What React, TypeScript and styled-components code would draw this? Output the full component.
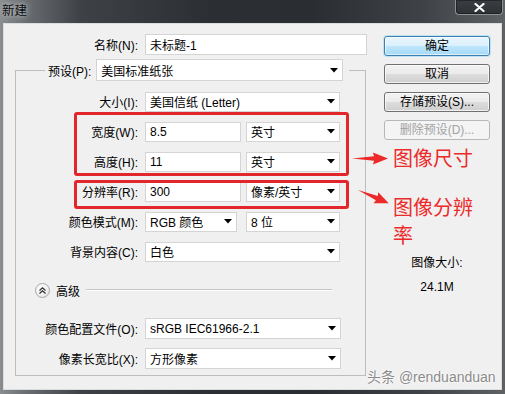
import React from "react";
import styled, { createGlobalStyle } from "styled-components";

const Global = createGlobalStyle`
  html, body { margin: 0; padding: 0; background: #2f3336; }
  body {
    font-family: "Liberation Sans", "Noto Sans CJK SC", sans-serif;
    font-size: 12px;
    color: #000;
  }
  * { box-sizing: border-box; }
`;

const Window = styled.div`
  position: relative;
  width: 505px;
  height: 394px;
  display: flex;
  flex-direction: column;
  overflow: hidden;
  background: linear-gradient(
    90deg,
    #8a8e91 0%,
    #6a6e72 5%,
    #3e4246 16%,
    #2b2f33 42%,
    #2a2e32 62%,
    #3f4347 84%,
    #5e6265 100%
  );
`;

const TitleBar = styled.div`
  height: 23px;
  flex: none;
  display: flex;
  align-items: flex-start;
  justify-content: space-between;
  padding-left: 2px;
`;

const Title = styled.span`
  font-family: "Noto Sans CJK SC", sans-serif;
  font-size: 12.5px;
  line-height: 20px;
  color: #0c0c0c;
  text-shadow: 0 0 4px rgba(200, 204, 206, 0.9), 0 0 8px rgba(200, 204, 206, 0.7);
`;

const CloseButton = styled.div`
  width: 48px;
  height: 15px;
  margin-right: 2px;
  border: 1px solid #8e9194;
  border-top: none;
  border-radius: 0 0 4px 4px;
  background: linear-gradient(#3a3e42, #2e3236);
  box-shadow: inset 0 0 0 1px rgba(0, 0, 0, 0.35);
  display: flex;
  align-items: center;
  justify-content: center;
`;

const Body = styled.div`
  flex: 1;
  margin: 0 3px 4px 3px;
  background: #f0f0f0;
  border: 1px solid #dcdcdc;
  display: flex;
  align-items: flex-start;
  padding: 10px 0 0 11px;
`;

const LeftCol = styled.div`
  width: 351px;
  flex: none;
  display: flex;
  flex-direction: column;
`;

const Row = styled.div<{ $mt?: number }>`
  display: flex;
  align-items: center;
  height: 21px;
  margin-top: ${(p) => p.$mt ?? 0}px;
`;

const Label = styled.span<{ $w: number }>`
  width: ${(p) => p.$w}px;
  flex: none;
  text-align: right;
  margin-right: 7px;
  white-space: nowrap;
  font-size: 12px;
  color: #000;
`;

const Field = styled.div<{ $w: number; $h?: number; $ml?: number }>`
  width: ${(p) => p.$w}px;
  height: ${(p) => p.$h ?? 20}px;
  margin-left: ${(p) => p.$ml ?? 0}px;
  flex: none;
  background: #fff;
  border: 1px solid #d4d4d4;
  display: flex;
  align-items: center;
  padding: 0 4px 0 4px;
  font-size: 12px;
  color: #000;
  white-space: nowrap;
  overflow: hidden;
`;

const Caret = styled.svg`
  margin-left: auto;
  flex: none;
`;

const Group = styled.fieldset`
  margin: 4px 0 0 0;
  padding: 10px 0 6px 0;
  border: 1px solid #bdbdbd;
  width: 351px;
  display: flex;
  flex-direction: column;
  gap: 9px;
  min-width: 0;
`;

const Legend = styled.legend`
  margin-left: 29px;
  padding: 0 6px 0 3px;
  display: flex;
  align-items: center;
`;

const LegendLabel = styled.span`
  margin-right: 5px;
  font-size: 12px;
  white-space: nowrap;
`;

const AdvancedRow = styled.div`
  display: flex;
  align-items: center;
  height: 20px;
  margin: 9px 0;
  padding-left: 19px;
`;

const RoundIcon = styled.div`
  width: 15px;
  height: 15px;
  border-radius: 50%;
  border: 1px solid #a8a8a8;
  background: radial-gradient(circle at 40% 35%, #ffffff 0%, #f2f2f2 50%, #d9d9d9 100%);
  display: flex;
  align-items: center;
  justify-content: center;
  flex: none;
`;

const AdvancedText = styled.span`
  margin-left: 6px;
  font-size: 12px;
`;

const Divider = styled.div`
  margin-left: 6px;
  width: 246px;
  height: 2px;
  border-top: 1px solid #c6c6c6;
  border-bottom: 1px solid #ffffff;
`;

const Side = styled.div`
  margin-left: 18px;
  width: 106px;
  padding-top: 2px;
  display: flex;
  flex-direction: column;
  gap: 8px;
`;

type Variant = "primary" | "normal" | "disabled";

const Button = styled.button<{ $variant?: Variant }>`
  width: 106px;
  height: 20px;
  padding: 0;
  font-family: "Liberation Sans", "Noto Sans CJK SC", sans-serif;
  font-size: 12px;
  line-height: 18px;
  border-radius: 3px;
  text-align: center;
  cursor: default;
  color: ${(p) => (p.$variant === "disabled" ? "#a3a3a3" : "#000")};
  border: 1px solid
    ${(p) =>
      p.$variant === "primary"
        ? "#3c7fb1"
        : p.$variant === "disabled"
        ? "#b5b8ba"
        : "#707070"};
  background: ${(p) =>
    p.$variant === "primary"
      ? "linear-gradient(#eaf6fd 0%, #d9f0fc 50%, #bee6fd 51%, #a7d9f5 100%)"
      : p.$variant === "disabled"
      ? "#f4f4f4"
      : "linear-gradient(#f2f2f2 0%, #ebebeb 50%, #dddddd 51%, #cfcfcf 100%)"};
  box-shadow: ${(p) =>
    p.$variant === "primary"
      ? "inset 0 0 0 1px rgba(255,255,255,0.6), 0 0 0 1px rgba(100,200,240,0.35)"
      : p.$variant === "disabled"
      ? "none"
      : "inset 0 0 0 1px rgba(255,255,255,0.7)"};
`;

const Info = styled.div`
  margin-top: 107px;
  display: flex;
  flex-direction: column;
  align-items: center;
  gap: 8px;
`;

const InfoText = styled.span`
  font-size: 12px;
  line-height: 16px;
  color: #000;
`;

/* ---------- annotations (overlay) ---------- */

const Overlay = styled.div`
  position: absolute;
  inset: 0;
  pointer-events: none;
`;

const RedBox = styled.div<{ $x: number; $y: number; $w: number; $h: number }>`
  position: absolute;
  left: ${(p) => p.$x}px;
  top: ${(p) => p.$y}px;
  width: ${(p) => p.$w}px;
  height: ${(p) => p.$h}px;
  border: 3px solid #e3262b;
  border-radius: 3px;
`;

const RedText = styled.div<{ $x: number; $y: number; $w: number }>`
  position: absolute;
  left: ${(p) => p.$x}px;
  top: ${(p) => p.$y}px;
  width: ${(p) => p.$w}px;
  font-family: "Noto Sans CJK SC", sans-serif;
  font-size: 20px;
  line-height: 28px;
  color: #ec2a2a;
`;

const ArrowSvg = styled.svg<{ $x: number; $y: number }>`
  position: absolute;
  left: ${(p) => p.$x}px;
  top: ${(p) => p.$y}px;
`;

const Watermark = styled.div`
  position: absolute;
  left: 367px;
  top: 369px;
  font-family: "Liberation Sans", "Noto Sans CJK SC", sans-serif;
  font-size: 14px;
  line-height: 16px;
  color: #8a8a8a;
  text-shadow: 0 0 2px #fff, 0 0 2px #fff;
  white-space: nowrap;
`;

const CaretIcon = () => (
  <Caret width="8" height="5" viewBox="0 0 8 5">
    <polygon points="0,0 8,0 4,4.5" fill="#000" />
  </Caret>
);

const Select: React.FC<{ w: number; h?: number; ml?: number; children: React.ReactNode }> = ({
  w,
  h,
  ml,
  children,
}) => (
  <Field $w={w} $h={h} $ml={ml}>
    <span>{children}</span>
    <CaretIcon />
  </Field>
);

const ARROW_POINTS = "0,6.5 22,4.2 21,0.5 36,6.5 21,12.5 22,8.8";

export default function App() {
  return (
    <>
      <Global />
      <Window>
        <TitleBar>
          <Title>新建</Title>
          <CloseButton>
            <svg width="11" height="9" viewBox="0 0 11 9">
              <path d="M1.5 1 L9.5 8 M9.5 1 L1.5 8" stroke="#fff" strokeWidth="2.2" strokeLinecap="round" />
            </svg>
          </CloseButton>
        </TitleBar>
        <Body>
          <LeftCol>
            <Row>
              <Label $w={123}>名称(N):</Label>
              <Field $w={222} $h={21}>未标题-1</Field>
            </Row>
            <Group>
              <Legend>
                <LegendLabel>预设(P):</LegendLabel>
                <Select w={247} h={22}>美国标准纸张</Select>
              </Legend>
              <Row>
                <Label $w={122}>大小(I):</Label>
                <Select w={195}>美国信纸 (Letter)</Select>
              </Row>
              <Row>
                <Label $w={122}>宽度(W):</Label>
                <Field $w={96}>8.5</Field>
                <Select w={94} ml={5}>英寸</Select>
              </Row>
              <Row>
                <Label $w={122}>高度(H):</Label>
                <Field $w={96}>11</Field>
                <Select w={94} ml={5}>英寸</Select>
              </Row>
              <Row>
                <Label $w={122}>分辨率(R):</Label>
                <Field $w={96}>300</Field>
                <Select w={94} ml={5}>像素/英寸</Select>
              </Row>
              <Row>
                <Label $w={122}>颜色模式(M):</Label>
                <Select w={92}>RGB 颜色</Select>
                <Select w={94} ml={9}>8 位</Select>
              </Row>
              <Row>
                <Label $w={122}>背景内容(C):</Label>
                <Select w={195}>白色</Select>
              </Row>
              <AdvancedRow>
                <RoundIcon>
                  <svg width="9" height="9" viewBox="0 0 9 9">
                    <path
                      d="M1.5 4.5 L4.5 1.8 L7.5 4.5 M1.5 7.5 L4.5 4.8 L7.5 7.5"
                      fill="none"
                      stroke="#333"
                      strokeWidth="1.3"
                    />
                  </svg>
                </RoundIcon>
                <AdvancedText>高级</AdvancedText>
                <Divider />
              </AdvancedRow>
              <Row>
                <Label $w={122}>颜色配置文件(O):</Label>
                <Select w={196} h={21}>sRGB IEC61966-2.1</Select>
              </Row>
              <Row>
                <Label $w={122}>像素长宽比(X):</Label>
                <Select w={196} h={21}>方形像素</Select>
              </Row>
            </Group>
          </LeftCol>
          <Side>
            <Button $variant="primary">确定</Button>
            <Button>取消</Button>
            <Button>存储预设(S)...</Button>
            <Button $variant="disabled" disabled>
              删除预设(D)...
            </Button>
            <Info>
              <InfoText>图像大小:</InfoText>
              <InfoText>24.1M</InfoText>
            </Info>
          </Side>
        </Body>
        <Overlay>
          <RedBox $x={74} $y={112} $w={275} $h={64} />
          <RedBox $x={74} $y={180} $w={275} $h={29} />
          <ArrowSvg $x={352} $y={152} width="38" height="14" viewBox="0 0 38 14">
            <polygon points={ARROW_POINTS} fill="#ec2a2a" />
          </ArrowSvg>
          <ArrowSvg $x={350} $y={180} width="45" height="35" viewBox="0 0 45 35">
            <g transform="translate(8,10) rotate(23.4) translate(0,-6.5) scale(0.93,1)">
              <polygon points={ARROW_POINTS} fill="#ec2a2a" />
            </g>
          </ArrowSvg>
          <RedText $x={393} $y={144} $w={100}>图像尺寸</RedText>
          <RedText $x={393} $y={193} $w={88}>图像分辨率</RedText>
          <Watermark>头条 @renduanduan</Watermark>
        </Overlay>
      </Window>
    </>
  );
}
